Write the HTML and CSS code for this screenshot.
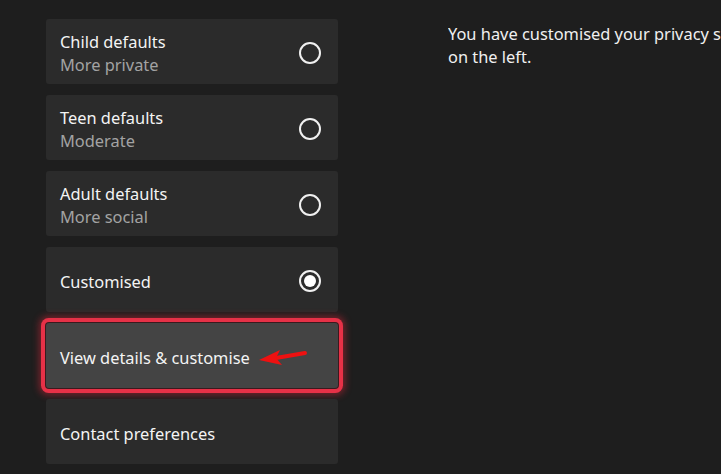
FILE: index.html
```html
<!DOCTYPE html>
<html lang="en">
<head>
    <meta charset="UTF-8">
    <title>Privacy settings</title>
    <link rel="stylesheet" href="styles.css">
</head>
<body>
    <div class="page">
        <div class="options">
            <div class="option">
                <div class="option-text">
                    <div class="title">Child defaults</div>
                    <div class="subtitle">More private</div>
                </div>
                <span class="radio"></span>
            </div>
            <div class="option">
                <div class="option-text">
                    <div class="title">Teen defaults</div>
                    <div class="subtitle">Moderate</div>
                </div>
                <span class="radio"></span>
            </div>
            <div class="option">
                <div class="option-text">
                    <div class="title">Adult defaults</div>
                    <div class="subtitle">More social</div>
                </div>
                <span class="radio"></span>
            </div>
            <div class="option">
                <div class="option-text">
                    <div class="title">Customised</div>
                </div>
                <span class="radio checked"></span>
            </div>
            <div class="option focused">
                <div class="option-text">
                    <div class="title">View details &amp; customise</div>
                </div>
                <svg class="arrow" width="52" height="22" viewBox="0 0 52 22">
                    <path d="M49 7 L20 12" stroke="#ee1111" stroke-width="4" stroke-linecap="round"/>
                    <path d="M3 14 L24 4 L20 12 L26 19 Z" fill="#ee1111"/>
                </svg>
            </div>
            <div class="option">
                <div class="option-text">
                    <div class="title">Contact preferences</div>
                </div>
            </div>
        </div>
        <div class="info">
            <p>You have customised your privacy settings. Change them using the options<br>on the left.</p>
        </div>
    </div>
</body>
</html>
```

FILE: styles.css
```css
body { margin: 0; background: #1e1e1e; font-family: "Noto Sans", "Open Sans", sans-serif; color: #f2f2f2; overflow: hidden; }
.page { display: flex; height: 474px; }
.options { width: 292px; flex-shrink: 0; margin-left: 46px; padding-top: 19px; display: flex; flex-direction: column; gap: 11px; }
.option {
    height: 65px; box-sizing: border-box; padding: 3px 15px 0 14px;
    background: #2b2b2b; border-radius: 3px;
    display: flex; align-items: center; justify-content: space-between;
}
.title { font-size: 16.4px; line-height: 23px; color: #f4f4f4; }
.subtitle { font-size: 16.4px; line-height: 23px; color: #a3a3a3; }
.radio { width: 18px; height: 18px; border: 2px solid #f0f0f0; border-radius: 50%; margin-right: 2px; position: relative; }
.radio.checked::after {
    content: ""; position: absolute; left: 3px; top: 3px; width: 12px; height: 12px;
    background: #fff; border-radius: 50%;
}
.option.focused {
    justify-content: flex-start; gap: 6px;
    background: #444444;
    box-shadow: 0 0 0 1px #3a1a1e, 0 0 0 5px #e63147, 0 0 7px 7px rgba(230, 40, 60, 0.45);
}
.arrow { margin-top: -1px; }
.info { flex: 1; margin-left: 110px; padding-top: 22px; overflow: hidden; }
.info p { margin: 0; font-size: 16.4px; line-height: 23px; color: #f0f0f0; white-space: nowrap; }
```
